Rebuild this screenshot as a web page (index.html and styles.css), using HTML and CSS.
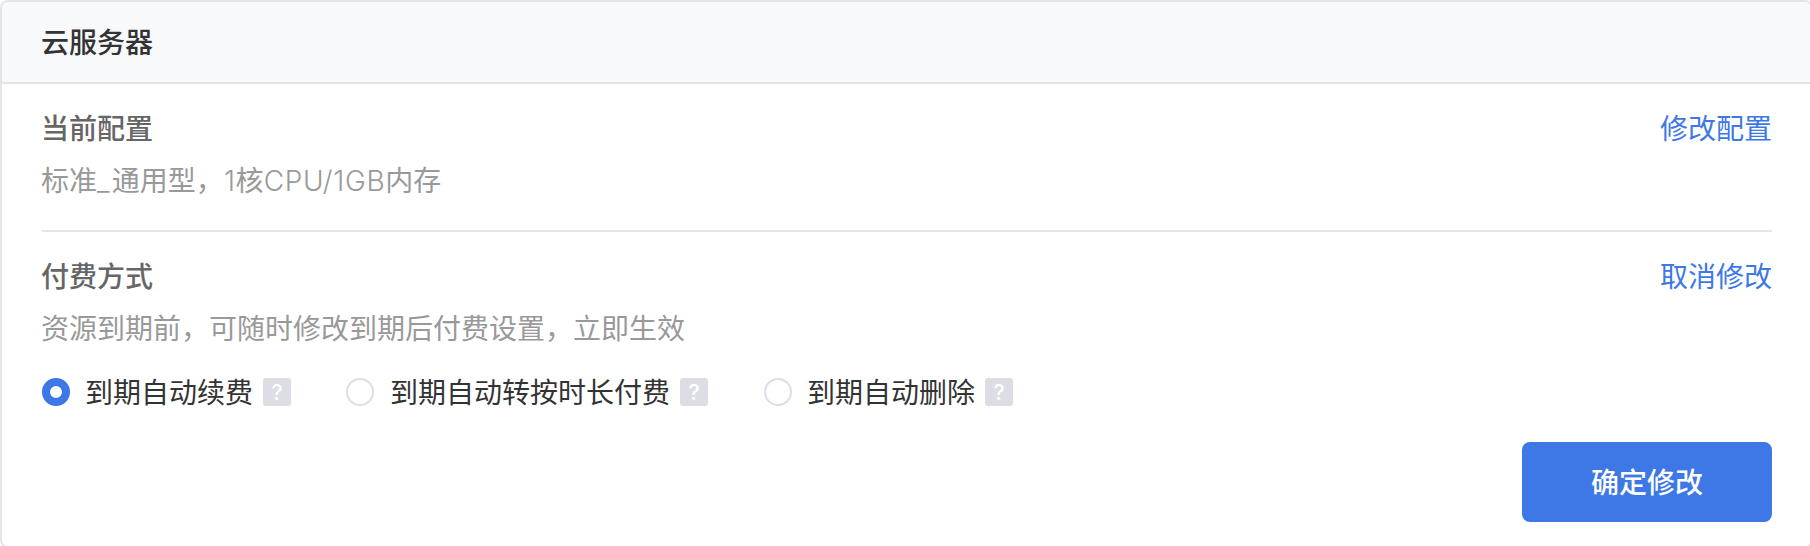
FILE: index.html
```html
<!DOCTYPE html>
<html lang="zh-CN">
<head>
<meta charset="utf-8">
<title>云服务器</title>
<link rel="stylesheet" href="styles.css">
</head>
<body>
<main class="card">
  <header class="card-header">云服务器</header>
  <div class="card-body">
    <section class="section config">
      <div class="row"><h2>当前配置</h2><a class="link">修改配置</a></div>
      <p class="desc">标准<span class="latin wide">_</span>通用型，<span class="latin">1</span>核<span class="latin">CPU/1GB</span>内存</p>
    </section>
    <section class="section payment">
      <div class="row"><h2>付费方式</h2><a class="link">取消修改</a></div>
      <p class="desc">资源到期前，可随时修改到期后付费设置，立即生效</p>
      <div class="options">
        <label class="option"><span class="radio checked"></span><span class="label">到期自动续费</span><span class="help">?</span></label>
        <label class="option"><span class="radio"></span><span class="label">到期自动转按时长付费</span><span class="help">?</span></label>
        <label class="option"><span class="radio"></span><span class="label">到期自动删除</span><span class="help">?</span></label>
      </div>
    </section>
    <div class="actions"><button class="submit">确定修改</button></div>
  </div>
</main>
</body>
</html>
```

FILE: styles.css
```css
* { box-sizing: border-box; }
body { margin: 0; width: 100vw; height: 100vh; overflow: hidden; background: #fff; font: 28px/40px "Liberation Sans", "Noto Sans CJK SC", sans-serif; }
.card { width: 1813px; height: 548px; overflow: hidden; border: 2px solid #e4e5ea; border-radius: 8px; }
.card-header { height: 82px; padding: 22px 39px 16px; background: #f8f9fb; border-bottom: 2px solid #e2e4e8; color: #333; font-weight: 500; }
.card-body { padding: 0 39px 0 40px; }
.row { display: flex; justify-content: space-between; }
.row h2 { margin: 0 0 0 -1px; font-size: 28px; font-weight: 500; color: #666; }
.link { color: #3d78e6; }
.desc { margin: 12px 0 0 -1px; color: #999; }
.latin { font-family: Inter, sans-serif; font-weight: 300; line-height: 1; letter-spacing: 0.7px; }
.latin.wide { letter-spacing: 2.3px; }
.config { height: 148px; padding-top: 26px; border-bottom: 2px solid #e4e4ea; }
.payment { height: 210px; padding-top: 26px; }
.options { display: flex; gap: 55px; margin-top: 24px; }
.option { display: flex; align-items: center; height: 36px; color: #333; }
.radio { width: 28px; height: 28px; margin-right: 15px; border: 2px solid #dcdde5; border-radius: 50%; }
.radio.checked { border: 8px solid #3d78e6; }
.option + .option .radio { margin-right: 16px; }
.option:last-child { margin-left: 1px; }
.option:last-child .radio { margin-right: 15px; }
.label { padding-top: 3px; }
.help { width: 28px; height: 28px; margin-left: 10px; border-radius: 3px; background: #dcdde5; color: #fff; font: 500 21px/29px Inter, sans-serif; text-align: center; }
.actions { display: flex; justify-content: flex-end; }
.submit { width: 250px; height: 80px; padding: 3px 0 0; border: 0; border-radius: 8px; background: #3d78e6; color: #fff; font: inherit; font-weight: 500; }
```
